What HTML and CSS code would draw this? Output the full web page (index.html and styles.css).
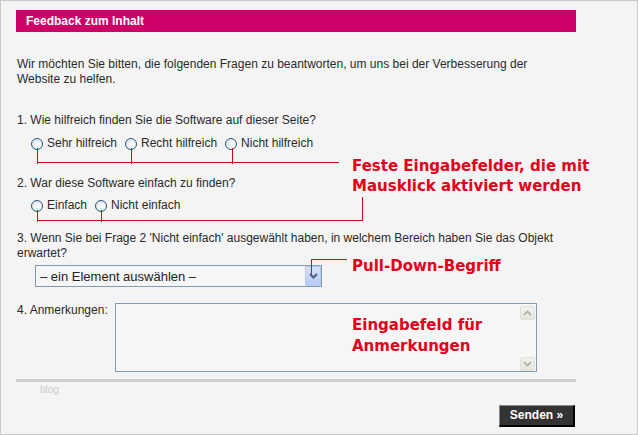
FILE: index.html
```html
<!DOCTYPE html>
<html lang="de">
<head>
<meta charset="utf-8">
<title>Feedback zum Inhalt</title>
<link rel="stylesheet" href="styles.css">
</head>
<body>
<div class="page">
  <div class="bar">Feedback zum Inhalt</div>
  <div class="form">
    <p class="intro">Wir möchten Sie bitten, die folgenden Fragen zu beantworten, um uns bei der Verbesserung der Website zu helfen.</p>

    <p class="q q1">1. Wie hilfreich finden Sie die Software auf dieser Seite?</p>
    <div class="radios r1">
      <span class="opt"><span class="radio"></span>Sehr hilfreich</span>
      <span class="opt"><span class="radio"></span>Recht hilfreich</span>
      <span class="opt"><span class="radio"></span>Nicht hilfreich</span>
    </div>

    <p class="q q2">2. War diese Software einfach zu finden?</p>
    <div class="radios r2">
      <span class="opt"><span class="radio"></span>Einfach</span>
      <span class="opt"><span class="radio"></span>Nicht einfach</span>
    </div>

    <p class="q q3">3. Wenn Sie bei Frage 2 'Nicht einfach' ausgewählt haben, in welchem Bereich haben Sie das Objekt<br>erwartet?</p>
    <div class="select">
      <span class="select-text">– ein Element auswählen –</span>
      <span class="select-btn">
        <svg width="9" height="6" viewBox="0 0 9 6"><path d="M1 1 L4.5 4.5 L8 1" fill="none" stroke="#4a5c80" stroke-width="2"/></svg>
      </span>
    </div>

    <div class="q4">
      <span class="q4-label">4. Anmerkungen:</span>
      <div class="textarea">
        <div class="scroll">
          <span class="sbtn"><svg width="9" height="6" viewBox="0 0 9 6"><path d="M1 5 L4.5 1.5 L8 5" fill="none" stroke="#a9a9a0" stroke-width="1.6"/></svg></span>
          <span class="sbtn"><svg width="9" height="6" viewBox="0 0 9 6"><path d="M1 1 L4.5 4.5 L8 1" fill="none" stroke="#a9a9a0" stroke-width="1.6"/></svg></span>
        </div>
      </div>
    </div>

    <div class="rule"></div>
    <div class="blog">blog</div>
    <div class="actions"><span class="send">Senden »</span></div>
  </div>

  <!-- annotation callouts -->
  <span class="ln v" style="left:36px;top:147px;height:16px"></span>
  <span class="ln v" style="left:130px;top:147px;height:16px"></span>
  <span class="ln v" style="left:231px;top:147px;height:16px"></span>
  <span class="ln h" style="left:36px;top:161px;width:302px"></span>

  <span class="ln v" style="left:36px;top:209px;height:12px"></span>
  <span class="ln v" style="left:100px;top:209px;height:12px"></span>
  <span class="ln h" style="left:36px;top:219px;width:326px"></span>
  <span class="ln v" style="left:361px;top:196px;height:24px"></span>

  <span class="ln v" style="left:310px;top:258px;height:15px"></span>
  <span class="ln h" style="left:310px;top:258px;width:36px"></span>

  <div class="note n1">Feste Eingabefelder, die mit<br>Mausklick aktiviert werden</div>
  <div class="note n2">Pull-Down-Begriff</div>
  <div class="note n3">Eingabefeld für<br>Anmerkungen</div>
</div>
</body>
</html>
```

FILE: styles.css
```css
html, body {
  margin: 0;
  padding: 0;
}
body {
  background: #f4f4f4;
  font-family: "Liberation Sans", Arial, sans-serif;
}
.page {
  position: relative;
  box-sizing: border-box;
  width: 638px;
  height: 435px;
  border: 1px solid #c9c9c9;
  background: #f4f4f4;
  padding: 9px 0 0 15px;
  overflow: hidden;
}
.bar {
  width: 550px;
  height: 22px;
  line-height: 22px;
  background: #cc0066;
  color: #fff;
  font-weight: bold;
  font-size: 12px;
  padding-left: 10px;
}
.form {
  width: 560px;
  color: #2a2a2a;
  font-size: 12px;
  line-height: 15px;
}
.intro {
  margin: 25px 0 0 1px;
  width: 540px;
}
.q {
  margin: 0 0 0 1px;
}
.q1 { margin-top: 26px; }
.q2 { margin-top: 25px; }
.q3 { margin-top: 18px; width: fit-content; }
.radios {
  display: flex;
  gap: 8px;
  padding-left: 15px;
}
.r1 { margin-top: 8px; }
.r2 { margin-top: 7px; }
.opt {
  display: flex;
  align-items: center;
  gap: 4px;
}
.radio {
  box-sizing: border-box;
  width: 12px;
  height: 12px;
  border-radius: 50%;
  border: 1px solid #2f5682;
  background: radial-gradient(circle at 60% 65%, #ffffff 0%, #eef0f2 45%, #d3d6db 100%);
}
.select {
  box-sizing: border-box;
  margin: 4px 0 0 19px;
  width: 287px;
  height: 22px;
  border: 1px solid #7f9db9;
  background: #f6f6f6;
  display: flex;
  align-items: center;
  justify-content: space-between;
  padding: 0 0 0 4px;
}
.select-text {
  font-size: 13px;
  color: #222;
}
.select-btn {
  box-sizing: border-box;
  width: 16px;
  height: 20px;
  background: linear-gradient(#d3e0fa, #b7cbf4);
  border: 1px solid #b8c9ee;
  border-radius: 1px;
  display: flex;
  align-items: center;
  justify-content: center;
}
.q4 {
  display: flex;
  align-items: flex-start;
  margin-top: 16px;
  padding-left: 1px;
}
.q4-label {
  width: 98px;
}
.textarea {
  box-sizing: border-box;
  width: 422px;
  height: 69px;
  border: 1px solid #7f9db9;
  background: #f6f6f6;
  display: flex;
  justify-content: flex-end;
}
.scroll {
  width: 16px;
  background: #f8f8f6;
  display: flex;
  flex-direction: column;
  justify-content: space-between;
  padding: 2px 0 0;
}
.sbtn {
  box-sizing: border-box;
  width: 15px;
  height: 14px;
  background: linear-gradient(#f2f2ec, #e6e5dd);
  border: 1px solid #e1e0d8;
  border-radius: 2px;
  display: flex;
  align-items: center;
  justify-content: center;
}
.rule {
  margin-top: 7px;
  height: 3px;
  background: #cccccc;
}
.blog {
  margin: 1px 0 0 24px;
  font-size: 10px;
  line-height: 13px;
  color: #cccccc;
}
.actions {
  display: flex;
  justify-content: flex-end;
  margin-top: 9px;
  padding-right: 1px;
}
.send {
  box-sizing: border-box;
  width: 76px;
  height: 22px;
  background: #333333;
  border-top: 1px solid #8a8a8a;
  border-left: 1px solid #8a8a8a;
  border-right: 2px solid #000;
  border-bottom: 2px solid #000;
  color: #fff;
  font-weight: bold;
  font-size: 12px;
  line-height: 19px;
  text-align: center;
}
.ln {
  position: absolute;
  background: #d10a16;
}
.ln.v { width: 1px; }
.ln.h { height: 1px; }
.note {
  position: absolute;
  left: 351px;
  white-space: nowrap;
  color: #e2001a;
  font-family: "DejaVu Sans", sans-serif;
  font-weight: bold;
  font-size: 15px;
  line-height: 20px;
}
.n1 { top: 155px; }
.n2 { top: 257px; line-height: 16px; }
.n3 { top: 314px; line-height: 21px; }
```
